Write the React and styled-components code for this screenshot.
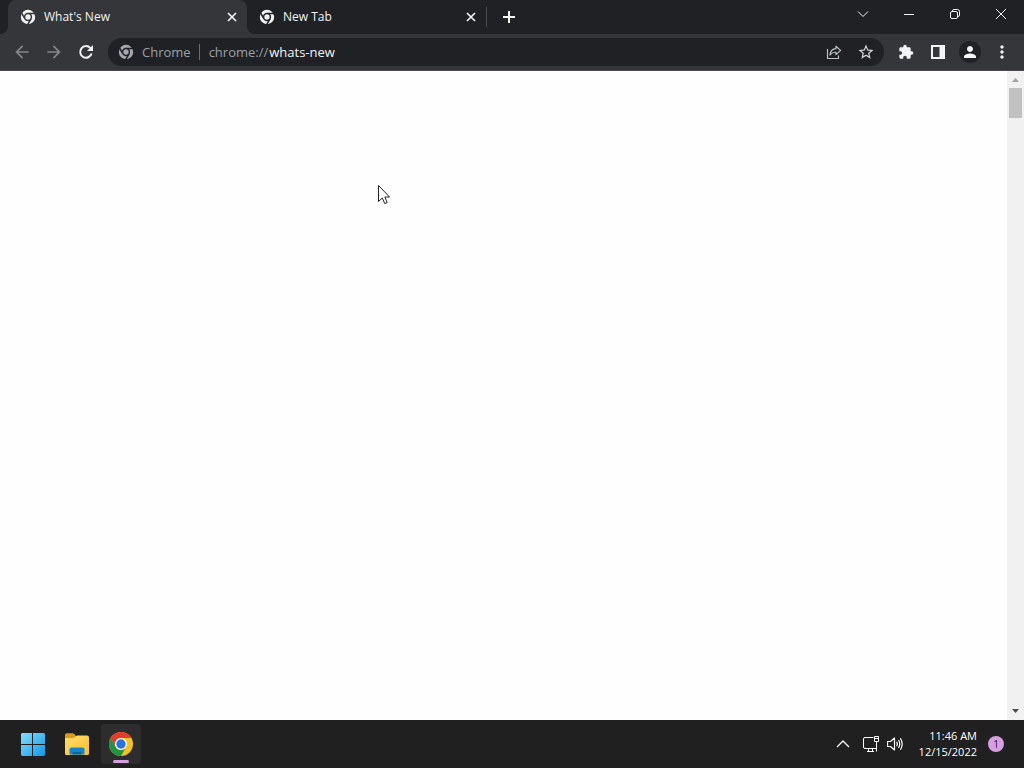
import React from "react";
import styled, { createGlobalStyle } from "styled-components";
import {
  MdArrowBack,
  MdArrowForward,
  MdExtension,
  MdStarBorder,
  MdPerson,
  MdMoreVert,
} from "react-icons/md";

const GlobalStyle = createGlobalStyle`
  * { box-sizing: border-box; }
  body {
    margin: 0;
    background: #fefefe;
    font-family: "Open Sans", "Noto Sans", sans-serif;
    font-size: 12px;
  }
  button, input { font: inherit; color: inherit; }
`;

const Screen = styled.div`
  display: flex;
  flex-direction: column;
  min-height: 100vh;
`;

const TabStrip = styled.header`
  display: flex;
  height: 34px;
  padding-left: 8px;
  background: #202124;
  color: #f1f3f4;
`;

const Tabs = styled.div`
  display: flex;
  flex: 0 1 478px;
  min-width: 0;
`;

const Tab = styled.div`
  position: relative;
  display: flex;
  align-items: center;
  flex: 1 1 0;
  min-width: 0;
  padding: 0 7px 0 12px;
  border-radius: 8px 8px 0 0;
  background: ${(p) => (p.$active ? "#35363a" : "transparent")};

  &::before,
  &::after {
    content: "";
    display: ${(p) => (p.$active ? "block" : "none")};
    position: absolute;
    bottom: 0;
    width: 8px;
    height: 8px;
  }
  &::before {
    right: 100%;
    background: radial-gradient(circle at 0 0, transparent 8px, #35363a 8px);
  }
  &::after {
    left: 100%;
    background: radial-gradient(circle at 100% 0, transparent 8px, #35363a 8px);
  }
`;

const PlainButton = styled.button`
  display: flex;
  align-items: center;
  justify-content: center;
  flex: none;
  padding: 0;
  border: 0;
  background: none;
  width: ${(p) => p.$w || 32}px;
  height: ${(p) => p.$h || 32}px;
  color: ${(p) => p.$color || "inherit"};
`;

const TabTitle = styled.button`
  display: flex;
  align-items: center;
  gap: 8px;
  flex: 1;
  min-width: 0;
  padding: 0;
  border: 0;
  background: none;
  line-height: 16px;
  white-space: nowrap;
`;

const Divider = styled.span`
  flex: none;
  align-self: center;
  width: 1px;
  height: ${(p) => p.$h}px;
  background: ${(p) => p.$color};
`;

const NewTab = styled(PlainButton)`
  margin: 1px 0 0 6px;
`;

const WindowControls = styled.div`
  display: flex;
  margin-left: auto;
`;

const Toolbar = styled.nav`
  display: flex;
  align-items: center;
  height: 37px;
  padding: 0 6px;
  background: #35363a;
  border-bottom: 1px solid #4a4a4e;
  color: #f1f3f4;
`;

const Omnibox = styled.div`
  display: flex;
  align-items: center;
  flex: 1;
  min-width: 0;
  height: 28px;
  margin: 0 6px;
  padding: 0 2px 0 10px;
  border-radius: 14px;
  background: #202124;
  color: #9aa0a6;
  font-size: 13px;
  line-height: 20px;
`;

const SiteChip = styled.span`
  margin: 0 8px;
`;

const Scheme = styled.label`
  margin: 0 1px 0 9px;
`;

const AddressInput = styled.input`
  flex: 1;
  min-width: 0;
  padding: 0;
  border: 0;
  outline: 0;
  background: none;
  color: #f1f3f4;
`;

const Avatar = styled.span`
  display: flex;
  align-items: center;
  justify-content: center;
  width: 22px;
  height: 22px;
  border-radius: 50%;
  background: #202124;
`;

const Page = styled.main`
  position: relative;
  display: flex;
  flex: 1;
  background: #fefefe;
`;

const PageBody = styled.div`
  flex: 1;
`;

const ScrollTrack = styled.div`
  display: flex;
  flex-direction: column;
  width: 17px;
  background: #f1f1f1;
`;

const ScrollThumb = styled.div`
  height: 30px;
  margin: 0 2px;
  background: #c1c1c1;
`;

const ScrollSpace = styled.div`
  flex: 1;
`;

const Pointer = styled.svg`
  position: absolute;
  left: 377px;
  top: 113px;
`;

const Taskbar = styled.footer`
  display: flex;
  align-items: center;
  justify-content: space-between;
  height: 48px;
  padding: 0 16px 0 13px;
  background: #202020;
  color: #ffffff;
`;

const Apps = styled.div`
  display: flex;
  gap: 4px;
`;

const AppButton = styled.button`
  position: relative;
  display: flex;
  align-items: center;
  justify-content: center;
  width: 40px;
  height: 40px;
  padding: 0;
  border: 0;
  border-radius: 4px;
  background: ${(p) => (p.$active ? "#2d2d2d" : "transparent")};

  &::after {
    content: "";
    display: ${(p) => (p.$active ? "block" : "none")};
    position: absolute;
    bottom: 1px;
    left: 12px;
    width: 16px;
    height: 3px;
    border-radius: 2px;
    background: #d59fe0;
  }
`;

const Tray = styled.div`
  display: flex;
  align-items: center;
`;

const Clock = styled.time`
  margin: 0 7px 0 12px;
  font-size: 11px;
  line-height: 16px;
  text-align: right;
`;

const Badge = styled.span`
  width: 16px;
  height: 16px;
  margin: 0 4px;
  border-radius: 50%;
  background: #d59fe0;
  color: #202020;
  font-size: 10px;
  line-height: 16px;
  text-align: center;
`;

function ChromeMark({ ink, ground }) {
  return (
    <svg width="16" height="16" viewBox="0 0 16 16" aria-hidden="true">
      <circle cx="8" cy="8" r="7.2" fill={ink} />
      <g stroke={ground} strokeWidth="1.5">
        {[0, 120, 240].map((a) => (
          <path key={a} d="M8 4.5H15.4" transform={`rotate(${a} 8 8)`} />
        ))}
        <circle cx="8" cy="8" r="3.4" fill={ink} />
      </g>
    </svg>
  );
}

function ChromeLogo() {
  return (
    <svg width="24" height="24" viewBox="0 0 24 24" aria-hidden="true">
      <circle cx="12" cy="12" r="12" fill="#fbc116" />
      <path d="M12 6H22.4A12 12 0 0 0 1.6 6L6.8 15A6 6 0 0 1 12 6Z" fill="#e33b2e" />
      <path d="M6.8 15L1.6 6A12 12 0 0 0 12 24L17.2 15A6 6 0 0 1 6.8 15Z" fill="#229342" />
      <circle cx="12" cy="12" r="6" fill="#ffffff" />
      <circle cx="12" cy="12" r="4.7" fill="#2573e8" />
    </svg>
  );
}

function WindowsLogo() {
  return (
    <svg width="24" height="24" viewBox="0 0 24 24" aria-hidden="true">
      <defs>
        <linearGradient id="winBlue" gradientUnits="userSpaceOnUse" x1="0" y1="0" x2="24" y2="24">
          <stop offset="0" stopColor="#85e0fb" />
          <stop offset="1" stopColor="#1099e8" />
        </linearGradient>
      </defs>
      <path
        fill="url(#winBlue)"
        d="M1 1H11V12H0V2ZM12 1H23L24 2V12H12ZM0 13H11V24H1L0 23ZM12 13H24V23L23 24H12Z"
      />
    </svg>
  );
}

function FolderLogo() {
  return (
    <svg width="26" height="24" viewBox="0 0 26 24" aria-hidden="true">
      <defs>
        <linearGradient id="folder" x1="0" y1="0" x2="1" y2="1">
          <stop offset="0" stopColor="#ffdf70" />
          <stop offset="1" stopColor="#fcbd29" />
        </linearGradient>
      </defs>
      <path d="M1 8V3Q1 1.2 2.8 1.2H8.6Q9.6 1.2 10.3 2L12 4H20V10H1Z" fill="#d99b18" />
      <path d="M1 6H9Q10 6 10.7 5.2L12 4Q12.6 3.5 13.5 3.5H23Q25 3.5 25 5.5V21.5Q25 23 23.5 23H2.5Q1 23 1 21.5Z" fill="url(#folder)" />
      <path d="M5.5 22.5V17.5Q5.5 15.5 7.5 15.5H18.5Q20.5 15.5 20.5 17.5V22.5Z" fill="#1683cf" />
      <path d="M8.5 22.5V21Q8.5 20 9.5 20H16.5Q17.5 20 17.5 21V22.5Z" fill="#0b62a5" />
    </svg>
  );
}

const Line = ({ size = 16, width = 1, d, children }) => (
  <svg
    width={size}
    height={size}
    viewBox={`0 0 ${size} ${size}`}
    fill="none"
    stroke="currentColor"
    strokeWidth={width}
    strokeLinejoin="round"
    aria-hidden="true"
  >
    {d && <path d={d} />}
    {children}
  </svg>
);

function ScrollArrow({ down }) {
  return (
    <svg width="17" height="17" viewBox="0 0 17 17" aria-hidden="true">
      <path d={down ? "M5 6H12L8.5 10Z" : "M5 11H12L8.5 7Z"} fill={down ? "#505050" : "#a3a3a3"} />
    </svg>
  );
}

function BrowserTab({ title, active }) {
  return (
    <Tab $active={active}>
      <TabTitle aria-current={active ? "page" : undefined}>
        <ChromeMark ink="#f1f3f4" ground={active ? "#35363a" : "#202124"} />
        {title}
      </TabTitle>
      <PlainButton $w={16} $h={16} aria-label={`Close ${title}`}>
        <Line width={1.7} d="M4 4L12 12M12 4L4 12" />
      </PlainButton>
    </Tab>
  );
}

export default function App() {
  return (
    <Screen>
      <GlobalStyle />
      <TabStrip>
        <Tabs>
          <BrowserTab title="What's New" active />
          <BrowserTab title="New Tab" />
        </Tabs>
        <Divider $h={20} $color="#4a4c50" />
        <NewTab aria-label="New tab">
          <Line width={2} d="M8 2V14M2 8H14" />
        </NewTab>
        <WindowControls>
          <PlainButton $w={46} $h={28} aria-label="Search tabs">
            <Line d="M3 5.5L8 10.5L13 5.5" />
          </PlainButton>
          <PlainButton $w={46} $h={28} aria-label="Minimize">
            <Line d="M3 8.5H13" />
          </PlainButton>
          <PlainButton $w={46} $h={28} aria-label="Restore">
            <Line>
              <rect x="3.5" y="5.5" width="7" height="7" rx="1.5" />
              <path d="M5.5 5.5V5Q5.5 3.5 7 3.5H10.5Q12.5 3.5 12.5 5.5V9Q12.5 10.5 11 10.5" />
            </Line>
          </PlainButton>
          <PlainButton $w={46} $h={28} aria-label="Close window">
            <Line d="M3 3L13 13M13 3L3 13" />
          </PlainButton>
        </WindowControls>
      </TabStrip>

      <Toolbar>
        <PlainButton $color="#85868a" aria-label="Back">
          <MdArrowBack size={20} />
        </PlainButton>
        <PlainButton $color="#85868a" aria-label="Forward">
          <MdArrowForward size={20} />
        </PlainButton>
        <PlainButton aria-label="Reload">
          <Line width={2}>
            <path d="M13.6 9.5A5.8 5.8 0 1 1 12.4 4.1" />
            <path d="M15 1V7H9Z" fill="currentColor" stroke="none" />
          </Line>
        </PlainButton>
        <Omnibox>
          <ChromeMark ink="#a5a8ad" ground="#202124" />
          <SiteChip>Chrome</SiteChip>
          <Divider $h={16} $color="#6b6e73" />
          <Scheme htmlFor="address">chrome://</Scheme>
          <AddressInput id="address" type="text" defaultValue="whats-new" spellCheck={false} />
          <PlainButton $h={28} $color="#bdc1c6" aria-label="Share">
            <Line width={1.2}>
              <path d="M1.5 5V14.5H12.5V11.5" />
              <path d="M10 2.2L14.6 6.4L10 10.6V8.3Q6.2 8 4 11Q4.4 5 10 4.6Z" />
            </Line>
          </PlainButton>
          <PlainButton $h={28} $color="#d5d8dc" aria-label="Bookmark this page">
            <MdStarBorder size={18} />
          </PlainButton>
        </Omnibox>
        <PlainButton aria-label="Extensions">
          <MdExtension size={16} />
        </PlainButton>
        <PlainButton aria-label="Side panel">
          <svg width="16" height="16" viewBox="0 0 16 16" aria-hidden="true">
            <path fillRule="evenodd" fill="currentColor" d="M1 1H15V15H1ZM3 3V13H9.5V3Z" />
          </svg>
        </PlainButton>
        <PlainButton aria-label="Profile">
          <Avatar>
            <MdPerson size={18} />
          </Avatar>
        </PlainButton>
        <PlainButton aria-label="Menu">
          <MdMoreVert size={20} />
        </PlainButton>
      </Toolbar>

      <Page>
        <PageBody />
        <ScrollTrack>
          <ScrollArrow />
          <ScrollThumb />
          <ScrollSpace />
          <ScrollArrow down />
        </ScrollTrack>
        <Pointer width="14" height="22" viewBox="0 0 14 22" aria-hidden="true">
          <path
            d="M1.5 1.5V17.5L5.3 14L7.8 19.6L10.2 18.5L7.8 13H12.6Z"
            fill="#ffffff"
            stroke="#222222"
            strokeWidth="1"
          />
        </Pointer>
      </Page>

      <Taskbar>
        <Apps>
          <AppButton aria-label="Start">
            <WindowsLogo />
          </AppButton>
          <AppButton aria-label="File Explorer">
            <FolderLogo />
          </AppButton>
          <AppButton $active aria-label="Google Chrome">
            <ChromeLogo />
          </AppButton>
        </Apps>
        <Tray>
          <PlainButton aria-label="Show hidden icons">
            <Line width={1.3} d="M2 11L8 5L14 11" />
          </PlainButton>
          <PlainButton $w={24} aria-label="Network">
            <Line>
              <path d="M10.5 1.5H2Q.5 1.5 .5 3V11Q.5 12.5 2 12.5H13.5M4 15.5H11M5.5 12.5V15.5M9.5 12.5V15.5" />
              <path d="M11.5 .5H15.5V5.5H11.5ZM11.5 2.5H15.5M13.5 5.5V15.5" />
            </Line>
          </PlainButton>
          <PlainButton $w={24} aria-label="Volume">
            <Line width={1.2}>
              <path d="M.5 5.5H3.5L7.5 2V14L3.5 10.5H.5Z" />
              <path d="M9.5 5.8Q11.2 8 9.5 10.2M11.5 4Q14 8 11.5 12M13.4 2.2Q17 8 13.4 13.8" />
            </Line>
          </PlainButton>
          <Clock dateTime="2022-12-15T11:46">
            11:46 AM
            <br />
            12/15/2022
          </Clock>
          <Badge>1</Badge>
        </Tray>
      </Taskbar>
    </Screen>
  );
}
